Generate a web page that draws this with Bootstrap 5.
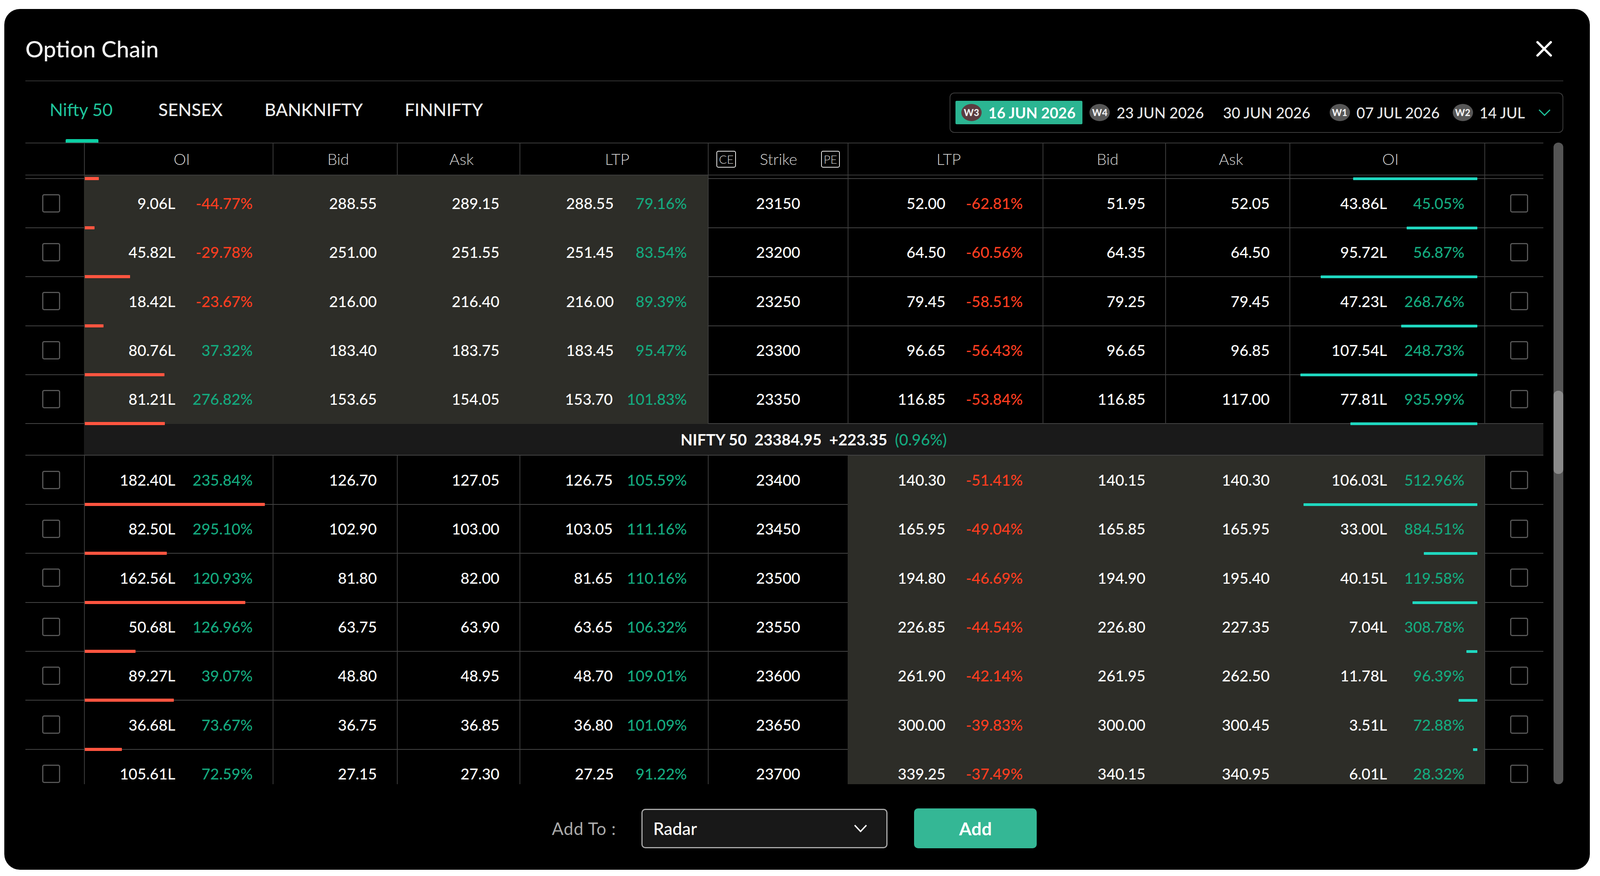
<!DOCTYPE html>
<html lang="en">
<head>
  <meta charset="UTF-8" />
  <meta name="viewport" content="width=device-width, initial-scale=1.0" />
  <title>Option Chain</title>
  <link href="https://cdn.jsdelivr.net/npm/bootstrap@5.3.0/dist/css/bootstrap.min.css" rel="stylesheet" />
  <style>
    html, body { height: 100%; margin: 0; background: #fff; }
    body { font-family: Lato, "Noto Sans", sans-serif; font-size: 39px; font-weight: 500; color: #fff; }

    .oc-page { padding: 23px 26px 16px 11px; height: 2242px; }
    .oc-modal { height: 2203px; background: #000; border-radius: 40px; padding: 0 68px 0 54px; }

    /* header */
    .oc-head { height: 185px; padding-top: 20px; border-bottom: 2px solid #333; }
    .oc-title { font-size: 58px; font-weight: 500; margin: 0; color: #f2f2f2; }
    .oc-close { width: 40px; height: 40px; margin-right: 29px; }

    /* index tabs + expiry strip */
    .oc-bar { height: 157px; }
    .oc-tabs { padding-left: 62px; gap: 107px; }
    .oc-tab { position: relative; font-size: 45px; font-weight: 500; color: #eee; padding: 0; height: 157px; line-height: 144px; }
    .oc-tab:hover { color: #eee; }
    .oc-tab.active { color: #1fc49b; font-weight: 400; margin-right: 10px; }
    .oc-tab.active::after { content: ""; position: absolute; left: 41px; bottom: 0; width: 84px; height: 9px; background: #0ccfa4; border-radius: 3px 3px 0 0; }

    .oc-expiry { width: 1571px; height: 103px; margin-top: 3px; border: 2px solid #3c3c3c; border-radius: 12px; padding: 0 30px 0 13px; }
    .oc-expiry-list { gap: 3px; }
    .oc-exp { flex: none; height: 60px; padding: 0 15px; gap: 17px; font-size: 38px; color: #e6e6e6; border-radius: 3px; }
    .oc-exp.active { background: #2bb592; color: #fff; font-weight: 700; padding-right: 18px; }
    .oc-week { width: 52px; height: 44px; border-radius: 50%; background: #575757; color: #eee; font-size: 24px; font-weight: 900; }
    .oc-exp.active .oc-week { background: #5c3c40; }
    .oc-chev { width: 32px; height: 18px; }

    /* chain table */
    .oc-main { height: 1642px; gap: 26px; }
    .oc-wrap { flex: 1 1 0; min-width: 0; height: 1642px; overflow: hidden; }
    .oc-table { width: 100%; table-layout: fixed; border-collapse: separate; border-spacing: 0; margin: 0;
      --bs-table-bg: transparent; --bs-table-color: #fff; --bs-table-border-color: #444; }
    .oc-table th, .oc-table td { padding: 0; border: 0; box-shadow: none; vertical-align: middle; color: #fff; }
    .oc-table th { height: 84px; border-top: 2px solid #3c3c3c; border-bottom: 2px solid #3c3c3c; font-weight: 300; font-size: 40px; color: #d8d8d8; text-align: center; padding-left: 16px; }
    .oc-table th.oc-line, .oc-table td.oc-line { border-left: 2px solid #3c3c3c; }
    .oc-table td { position: relative; height: 125.4px; border-bottom: 2px solid #444; padding-right: 51px; font-weight: 500; }
    .oc-table tr.oc-partial td { height: 9.4px; }
    .oc-table tr.oc-spotrow td { height: 81px; }
    .oc-table td.oc-chk-ce { padding: 0 0 0 43px; }
    .oc-table td.oc-chk-pe { padding: 0 0 0 64px; }
    .oc-table td.oc-itm { background-color: #2d2d28; border-bottom-color: transparent; border-left-color: transparent; }
    .oc-table td.oc-strike { padding: 0; text-align: center; }
    .oc-table td.oc-ltp { padding-right: 54px; }
    .oc-table td.oc-spot { padding: 0; background-color: #1a1a1a; text-align: center; font-size: 40px; font-weight: 700; }
    .oc-cellrow { justify-content: flex-end; }
    .oc-gap { margin-left: 36px; min-width: 151px; text-align: right; }
    .oc-pct { width: 198px; text-align: right; }
    .oc-up { color: #14a97e; font-weight: 500; }
    .oc-down { color: #ff3d20; font-weight: 500; }

    .oc-check.form-check-input { display: block; width: 46px; height: 47px; margin: 0; float: none; background-color: transparent; border: 3px solid #565656; border-radius: 5px; }
    .oc-oibar { position: absolute; bottom: -5px; height: 8px; z-index: 1; border-radius: 1px; }
    .oc-oibar.ce { left: 0; background: #ff5540; }
    .oc-oibar.pe { right: 3.5%; background: #1fd8c0; height: 7px; }
    .oc-tag { display: inline-block; min-width: 48px; border: 2px solid #e8e8e8; border-radius: 5px; font-size: 30px; line-height: 39px; height: 43px; padding: 0 4px; }
    .oc-strike-head { justify-content: space-between; padding: 0 20px 0 20px; }

    .oc-scroll { width: 25px; height: 1642px; border-radius: 12px; background: #555; }
    .oc-thumb { width: 25px; height: 213px; margin-top: 635px; border-radius: 12px; background: #8a8a8a; }

    /* footer */
    .oc-foot { padding-top: 62px; }
    .oc-label { color: #aaa; font-size: 44px; font-weight: 400; letter-spacing: 1px; margin-right: 65px; }
    .oc-select { width: 630px; height: 101px; background: #181818; border: 3px solid #aaa; border-radius: 10px; padding: 0 49px 0 27px; margin-right: 68px; font-size: 44px; }
    .oc-add.btn { width: 314px; height: 102px; background: #34b795; border: 0; border-radius: 10px; color: #fff; font-size: 46px; font-weight: 700; }
  </style>
</head>
<body>
  <div class="oc-page">
    <div class="oc-modal">
      <div class="oc-head d-flex align-items-center justify-content-between">
        <h5 class="oc-title">Option Chain</h5>
        <svg class="oc-close" viewBox="0 0 40 40"><path d="M3 3L37 37M37 3L3 37" stroke="#fff" stroke-width="6" stroke-linecap="round" /></svg>
      </div>

      <div class="oc-bar d-flex align-items-center justify-content-between">
        <nav class="nav oc-tabs">
          <a class="nav-link oc-tab active" href="#">Nifty 50</a>
          <a class="nav-link oc-tab" href="#">SENSEX</a>
          <a class="nav-link oc-tab" href="#">BANKNIFTY</a>
          <a class="nav-link oc-tab" href="#">FINNIFTY</a>
        </nav>
        <div class="oc-expiry d-flex align-items-center justify-content-between">
          <div class="oc-expiry-list d-flex align-items-center">
            <div class="oc-exp active d-flex align-items-center"><span class="oc-week d-flex align-items-center justify-content-center">W3</span>16 JUN 2026</div>
            <div class="oc-exp d-flex align-items-center"><span class="oc-week d-flex align-items-center justify-content-center">W4</span>23 JUN 2026</div>
            <div class="oc-exp d-flex align-items-center ms-3">30 JUN 2026</div>
            <div class="oc-exp d-flex align-items-center ms-3"><span class="oc-week d-flex align-items-center justify-content-center">W1</span>07 JUL 2026</div>
            <div class="oc-exp d-flex align-items-center"><span class="oc-week d-flex align-items-center justify-content-center">W2</span>14 JUL</div>
          </div>
          <svg class="oc-chev" viewBox="0 0 32 18"><path d="M2 2L16 16L30 2" fill="none" stroke="#1fc49b" stroke-width="3" /></svg>
        </div>
      </div>

      <div class="oc-main d-flex">
        <div class="oc-wrap">
          <table class="table oc-table">
            <colgroup>
              <col style="width:3.862%"><col style="width:12.424%"><col style="width:8.181%"><col style="width:8.079%"><col style="width:12.424%"><col style="width:9.197%">
              <col style="width:12.856%"><col style="width:8.079%"><col style="width:8.181%"><col style="width:12.83%"><col style="width:3.887%">
            </colgroup>
            <thead>
              <tr>
                <th></th>
                <th class="oc-line">OI</th>
                <th class="oc-line">Bid</th>
                <th class="oc-line">Ask</th>
                <th class="oc-line">LTP</th>
                <th class="oc-line p-0"><div class="d-flex align-items-center oc-strike-head"><span class="oc-tag">CE</span><span>Strike</span><span class="oc-tag">PE</span></div></th>
                <th class="oc-line">LTP</th>
                <th class="oc-line">Bid</th>
                <th class="oc-line">Ask</th>
                <th class="oc-line">OI</th>
                <th class="oc-line"></th>
              </tr>
            </thead>
            <tbody id="chainBody"></tbody>
          </table>
        </div>
        <div class="oc-scroll"><div class="oc-thumb"></div></div>
      </div>

      <div class="oc-foot d-flex align-items-center justify-content-center">
        <span class="oc-label">Add To :</span>
        <div class="oc-select d-flex align-items-center justify-content-between">
          <span>Radar</span>
          <svg width="34" height="20" viewBox="0 0 34 20"><path d="M2 2L17 18L32 2" fill="none" stroke="#fff" stroke-width="3.5" /></svg>
        </div>
        <button class="btn oc-add">Add</button>
      </div>
    </div>
  </div>

  <script src="https://cdn.jsdelivr.net/npm/bootstrap@5.3.0/dist/js/bootstrap.bundle.min.js"></script>
  <script>
    // strike, CE: oi oi% bid ask ltp ltp% bar, PE: ltp ltp% bid ask oi oi% bar (bar = % of the OI column)
    const rowsAbove = [
      ["23150","9.06L",-44.77,"288.55","289.15","288.55",79.16,5.1,"52.00",-62.81,"51.95","52.05","43.86L",45.05,36.6],
      ["23200","45.82L",-29.78,"251.00","251.55","251.45",83.54,24.1,"64.50",-60.56,"64.35","64.50","95.72L",56.87,80.8],
      ["23250","18.42L",-23.67,"216.00","216.40","216.00",89.39,10,"79.45",-58.51,"79.25","79.45","47.23L",268.76,39.4],
      ["23300","80.76L",37.32,"183.40","183.75","183.45",95.47,42.5,"96.65",-56.43,"96.65","96.85","107.54L",248.73,91.3],
      ["23350","81.21L",276.82,"153.65","154.05","153.70",101.83,42.7,"116.85",-53.84,"116.85","117.00","77.81L",935.99,65.5]
    ];
    const rowsBelow = [
      ["23400","182.40L",235.84,"126.70","127.05","126.75",105.59,95.9,"140.30",-51.41,"140.15","140.30","106.03L",512.96,89.7],
      ["23450","82.50L",295.10,"102.90","103.00","103.05",111.16,43.6,"165.95",-49.04,"165.85","165.95","33.00L",884.51,27.7],
      ["23500","162.56L",120.93,"81.80","82.00","81.65",110.16,85.5,"194.80",-46.69,"194.90","195.40","40.15L",119.58,33.5],
      ["23550","50.68L",126.96,"63.75","63.90","63.65",106.32,27,"226.85",-44.54,"226.80","227.35","7.04L",308.78,5.7],
      ["23600","89.27L",39.07,"48.80","48.95","48.70",109.01,47.4,"261.90",-42.14,"261.95","262.50","11.78L",96.39,9.7],
      ["23650","36.68L",73.67,"36.75","36.85","36.80",101.09,19.8,"300.00",-39.83,"300.00","300.45","3.51L",72.88,2.4],
      ["23700","105.61L",72.59,"27.15","27.30","27.25",91.22,0,"339.25",-37.49,"340.15","340.95","6.01L",28.32,0]
    ];

    const pct = (v) => `<span class="${v < 0 ? "oc-down" : "oc-up"}">${v.toFixed(2)}%</span>`;
    const box = `<input class="form-check-input oc-check" type="checkbox">`;

    function chainRow(r, ceItm) {
      const ce = ceItm ? "oc-line oc-itm" : "oc-line";
      const pe = ceItm ? "oc-line" : "oc-line oc-itm";
      return `<tr><td class="oc-chk-ce">${box}</td>
        <td class="${ce}"><div class="d-flex oc-cellrow"><span>${r[1]}</span><span class="oc-pct">${pct(r[2])}</span></div>${r[7] ? `<i class="oc-oibar ce" style="width:${r[7]}%"></i>` : ""}</td>
        <td class="${ce} text-end">${r[3]}</td>
        <td class="${ce} text-end">${r[4]}</td>
        <td class="${ce} oc-ltp"><div class="d-flex oc-cellrow"><span>${r[5]}</span><span class="oc-gap">${pct(r[6])}</span></div></td>
        <td class="oc-line oc-strike">${r[0]}</td>
        <td class="${pe}"><div class="d-flex oc-cellrow"><span>${r[8]}</span><span class="oc-pct">${pct(r[9])}</span></div></td>
        <td class="${pe} text-end">${r[10]}</td>
        <td class="${pe} text-end">${r[11]}</td>
        <td class="${pe}"><div class="d-flex oc-cellrow"><span>${r[12]}</span><span class="oc-pct">${pct(r[13])}</span></div>${r[14] ? `<i class="oc-oibar pe" style="width:${r[14]}%"></i>` : ""}</td>
        <td class="oc-line oc-chk-pe">${box}</td></tr>`;
    }

    // tail of the row scrolled off above 23150
    const partial = `<tr class="oc-partial"><td></td>
      <td class="oc-line oc-itm"><i class="oc-oibar ce" style="width:7.4%"></i></td>
      <td class="oc-line oc-itm"></td><td class="oc-line oc-itm"></td><td class="oc-line oc-itm"></td>
      <td class="oc-line"></td><td class="oc-line"></td><td class="oc-line"></td><td class="oc-line"></td>
      <td class="oc-line"><i class="oc-oibar pe" style="width:64.2%"></i></td><td class="oc-line"></td></tr>`;

    const spot = `<tr class="oc-spotrow"><td></td><td class="oc-spot" colspan="10">NIFTY 50&nbsp; 23384.95&nbsp; +223.35&nbsp; <span class="oc-up">(0.96%)</span></td></tr>`;

    document.getElementById("chainBody").innerHTML =
      partial + rowsAbove.map((r) => chainRow(r, true)).join("") + spot + rowsBelow.map((r) => chainRow(r, false)).join("");
  </script>
</body>
</html>
